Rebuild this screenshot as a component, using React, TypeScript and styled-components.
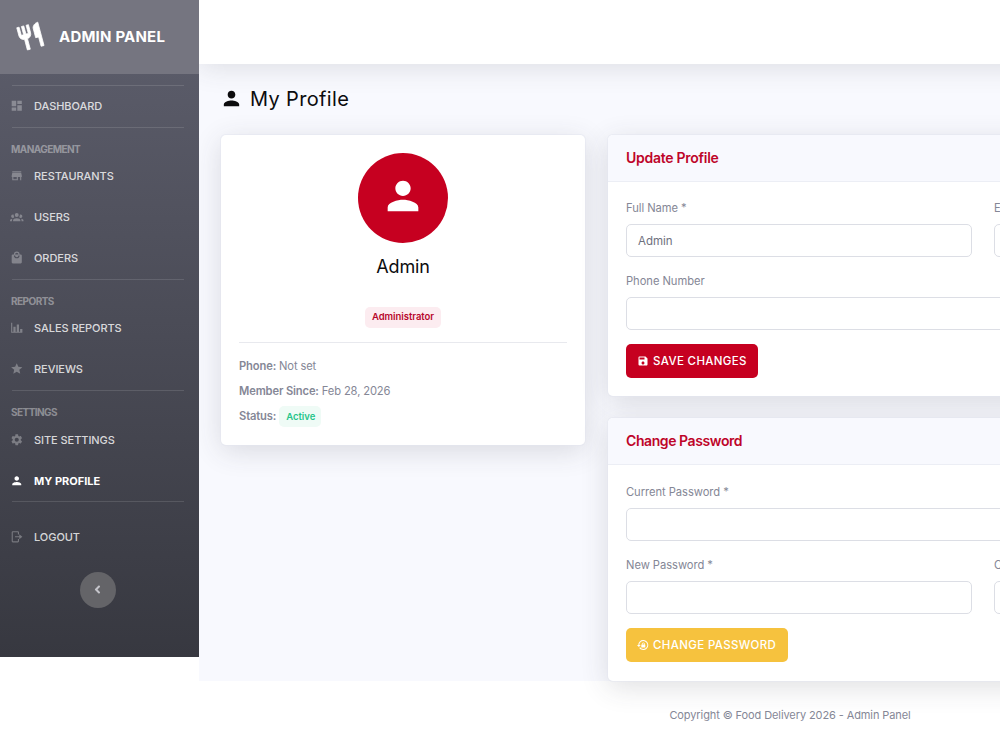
import React from "react";
import styled, { createGlobalStyle, css } from "styled-components";
import {
  MdDashboard, MdStoreMallDirectory, MdStar, MdSettings, MdPerson, MdSave,
} from "react-icons/md";
import { FaAngleLeft } from "react-icons/fa";

const Global = createGlobalStyle`
  * { box-sizing: border-box; }
  html, body { margin: 0; background: #fff; overflow: hidden; }
  body { font-family: Inter, "Liberation Sans", sans-serif; font-size: 11.5px; color: #858796; }
`;

const Page = styled.div`
  display: flex;
  align-items: flex-start;
  width: 1000px;
  height: 750px;
  overflow: hidden;
`;

const Sidebar = styled.nav`
  position: relative;
  z-index: 1;
  flex: none;
  width: 199px;
  height: 657px;
  background: linear-gradient(180deg, #5e5f6d 0%, #373840 100%);
`;
const Brand = styled.div`
  height: 74px;
  display: flex;
  align-items: center;
  padding: 0 0 2px 16px;
  background: #757580;
  color: #fff;
  font-size: 15px;
  font-weight: 700;
  white-space: nowrap;
`;
const BrandIcon = styled.span`
  display: flex;
  width: 43px;
  font-size: 29px;
  transform: rotate(-15deg);
  transform-origin: 15px 15px;
  svg { stroke: currentColor; stroke-width: 0.6px; }
`;
const BrandText = styled.span`letter-spacing: 0.2px;`;
const Divider = styled.div<{ $top?: number }>`
  height: 1px;
  margin: ${(p) => p.$top ?? 0}px 15px 0 12px;
  background: rgba(255, 255, 255, 0.12);
`;
const Heading = styled.div`
  height: 28px;
  padding: 15px 0 0 11px;
  font-size: 10px;
  line-height: 13px;
  font-weight: 700;
  letter-spacing: -0.55px;
  color: rgba(255, 255, 255, 0.4);
`;
const Item = styled.div<{ $active?: boolean; $top?: number; $low?: boolean }>`
  height: 41px;
  margin-top: ${(p) => p.$top ?? 0}px;
  padding: 0 0 ${(p) => (p.$low ? 0 : 2)}px 10px;
  display: flex;
  align-items: center;
  color: rgba(255, 255, 255, 0.8);
  font-size: 11px;
  font-weight: 500;
  letter-spacing: -0.06px;
  white-space: nowrap;
  svg { color: rgba(255, 255, 255, 0.3); }
  ${(p) => p.$active && css`
    color: #fff;
    font-weight: 700;
    letter-spacing: 0;
    svg { color: #fff; }
  `}
`;
const ItemIcon = styled.span`
  display: flex;
  width: 24px;
  font-size: 13.5px;
`;
const Toggle = styled.div`
  width: 36px;
  height: 36px;
  margin: 14px 0 0 80px;
  padding: 0 2px 1px 0;
  border-radius: 50%;
  display: flex;
  align-items: center;
  justify-content: center;
  background: #646468;
  color: #c4c4ca;
  font-size: 13px;
`;

const Main = styled.main`
  flex: none;
  width: 1182px;
`;
const Body = styled.div`
  height: 681px;
  background: #f8f9fe;
`;
const Topbar = styled.div`
  height: 64px;
  background: #fff;
  box-shadow: 0 3px 28px rgba(58, 59, 69, 0.15);
`;
const Title = styled.h1`
  height: 71px;
  margin: 0;
  padding: 0 0 1px 21px;
  display: flex;
  align-items: center;
  gap: 7px;
  font-size: 20px;
  font-weight: 400;
  letter-spacing: 0.35px;
  color: #0c0c0e;
  svg { font-size: 23px; margin-bottom: 2px; }
`;
const Columns = styled.div`
  display: flex;
  align-items: flex-start;
  gap: 23px;
  padding-left: 22px;
`;
const Stack = styled.div`
  display: flex;
  flex-direction: column;
  gap: 22px;
`;
const Card = styled.section<{ $w: number; $h: number }>`
  width: ${(p) => p.$w}px;
  height: ${(p) => p.$h}px;
  border-radius: 5px;
  background: #fff;
  box-shadow: 0 0 0 1px rgba(227, 230, 240, 0.5), 0 6px 28px rgba(58, 59, 69, 0.16);
`;
const CardHead = styled.h2<{ $tight?: boolean }>`
  height: 47px;
  margin: 0;
  padding: 0 18px 1px;
  display: flex;
  align-items: center;
  border-bottom: 1px solid #eceef5;
  border-radius: 5px 5px 0 0;
  background: #f8f9fe;
  font-size: 14px;
  font-weight: 600;
  letter-spacing: ${(p) => (p.$tight ? -0.42 : -0.27)}px;
  color: #be0529;
`;
const Profile = styled.div`
  padding-top: 18px;
  display: flex;
  flex-direction: column;
  align-items: center;
`;
const Avatar = styled.div`
  width: 90px;
  height: 90px;
  border-radius: 50%;
  display: flex;
  align-items: center;
  justify-content: center;
  padding-bottom: 5px;
  background: #c60020;
  color: #fff;
  font-size: 46px;
`;
const Name = styled.div`
  margin-top: 12px;
  height: 24px;
  line-height: 24px;
  font-size: 18px;
  letter-spacing: -0.1px;
  color: #0c0c0e;
`;
const Badge = styled.span<{ $green?: boolean }>`
  display: inline-flex;
  align-items: center;
  height: 21px;
  padding: 0 7px 2px;
  border-radius: 5px;
  font-size: 9.5px;
  font-weight: 600;
  letter-spacing: -0.03px;
  color: ${(p) => (p.$green ? "#27c58a" : "#b8062b")};
  background: ${(p) => (p.$green ? "#effbf6" : "#fcecf0")};
`;
const Role = styled.div`
  display: flex;
  margin-top: 28px;
`;
const Facts = styled.div`
  margin: 14px 18px 0;
  padding-top: 10px;
  border-top: 1px solid #e8e9ee;
`;
const Fact = styled.div`
  height: 25px;
  display: flex;
  align-items: center;
  gap: 3px;
  font-size: 11.2px;
  letter-spacing: -0.14px;
  b { font-weight: 600; }
  ${Badge} { margin-top: 2px; padding: 0 6px 1px 7px; }
`;
const Form = styled.div<{ $top: number }>`padding: ${(p) => p.$top}px 18px 0;`;
const Row = styled.div<{ $top?: number }>`
  display: flex;
  gap: 22px;
  margin-top: ${(p) => p.$top ?? 0}px;
`;
const Field = styled.div`
  flex: 1;
  label {
    display: block;
    height: 25px;
    line-height: 18px;
    font-size: 11.2px;
    letter-spacing: -0.05px;
  }
`;
const Input = styled.div`
  height: 33px;
  padding: 0 10px 0 11px;
  display: flex;
  align-items: center;
  border: 1px solid #dcdee5;
  border-radius: 5px;
  color: #6e707e;
`;
const Button = styled.div<{ $w: number; $yellow?: boolean }>`
  width: ${(p) => p.$w}px;
  height: 34px;
  margin-top: 14px;
  padding: 0 0 1px 11px;
  display: flex;
  align-items: center;
  gap: 4px;
  border-radius: 5px;
  background: ${(p) => (p.$yellow ? "#f6c23e" : "#c60020")};
  color: #fff;
  font-size: 11.5px;
  font-weight: 500;
  letter-spacing: 0.35px;
  white-space: nowrap;
  svg { font-size: 12px; }
`;
const Footer = styled.footer`
  padding-top: 26px;
  text-align: center;
  line-height: 16px;
  font-size: 11px;
  letter-spacing: -0.1px;
`;

const Glyph = ({ d }: { d: string }) => (
  <svg width="1em" height="1em" viewBox="0 0 24 24" fill="currentColor"><path d={d} /></svg>
);
const cutlery = "M11 9H9V2H7V9H5V2H3V9C3 11.120 4.660 12.840 6.750 12.970V22H9.250V12.970C11.340 12.840 13 11.120 13 9V2H11V9M16 6V14H18.500V22H21V2C18.240 2 16 4.240 16 6Z";
const people = "M12 5.500A3.500 3.500 0 1 1 12 12.500A3.500 3.500 0 0 1 12 5.500M5 8C5.560 8 6.080 8.150 6.530 8.420C6.380 9.850 6.800 11.270 7.660 12.380C7.160 13.340 6.160 14 5 14A3 3 0 0 1 5 8M19 8A3 3 0 0 1 19 14C17.840 14 16.840 13.340 16.340 12.380C17.200 11.270 17.620 9.850 17.470 8.420C17.920 8.150 18.440 8 19 8M5.500 18.250C5.500 16.180 8.410 14.500 12 14.500S18.500 16.180 18.500 18.250V20H5.500ZM0 20V18.500C0 17.110 1.890 15.940 4.450 15.600C3.860 16.280 3.500 17.220 3.500 18.250V20ZM24 20H20.500V18.250C20.500 17.220 20.140 16.280 19.550 15.600C22.110 15.940 24 17.110 24 18.500Z";
const bag = "M12 1a5 5 0 0 0-5 5H5a2 2 0 0 0-2 2v12a2 2 0 0 0 2 2h14a2 2 0 0 0 2-2V8a2 2 0 0 0-2-2h-2a5 5 0 0 0-5-5m0 2a3 3 0 0 1 3 3H9a3 3 0 0 1 3-3M7 8H9A3 3 0 0 0 15 8H17A5 5 0 0 1 7 8";
const bars = "M22 21H2V3H4V19H6V10H10V19H12V6H16V19H18V14H22Z";
const exit = "M14 8V4H5V20H14V16H16V20A2 2 0 0 1 14 22H5A2 2 0 0 1 3 20V4A2 2 0 0 1 5 2H14A2 2 0 0 1 16 4V8ZM16.500 7.500L22 12L16.500 16.500V13H9V11H16.500Z";
const lockReset = "M12.600 2A10 10 0 1 1 4.500 18L6.200 16.700A8 8 0 1 0 4.600 12H7.500L3.700 16L0 12H2.600A10 10 0 0 1 12.600 2M15.600 11V10A3 3 0 0 0 9.600 10V11A1 1 0 0 0 8.600 12V16A1 1 0 0 0 9.600 17H15.600A1 1 0 0 0 16.600 16V12A1 1 0 0 0 15.600 11M14.300 11H10.900V10A1.700 1.700 0 0 1 14.300 10Z";

type NavItemProps = { icon: React.ReactNode; children: React.ReactNode; active?: boolean; top?: number; low?: boolean };
const NavItem = ({ icon, children, active, top, low }: NavItemProps) => (
  <Item $active={active} $top={top} $low={low}><ItemIcon>{icon}</ItemIcon>{children}</Item>
);
const FormField = ({ label, value }: { label: string; value?: string }) => (
  <Field><label>{label}</label><Input>{value}</Input></Field>
);

export default function App() {
  return (
    <>
      <Global />
      <Page>
        <Sidebar>
          <Brand><BrandIcon><Glyph d={cutlery} /></BrandIcon><BrandText>ADMIN PANEL</BrandText></Brand>
          <Divider $top={11} />
          <NavItem icon={<MdDashboard />}>DASHBOARD</NavItem>
          <Divider />
          <Heading>MANAGEMENT</Heading>
          <NavItem icon={<MdStoreMallDirectory />}>RESTAURANTS</NavItem>
          <NavItem icon={<Glyph d={people} />}>USERS</NavItem>
          <NavItem icon={<Glyph d={bag} />}>ORDERS</NavItem>
          <Divider />
          <Heading>REPORTS</Heading>
          <NavItem icon={<Glyph d={bars} />}>SALES REPORTS</NavItem>
          <NavItem icon={<MdStar />}>REVIEWS</NavItem>
          <Divider />
          <Heading>SETTINGS</Heading>
          <NavItem icon={<MdSettings />} low>SITE SETTINGS</NavItem>
          <NavItem icon={<MdPerson />} active low>MY PROFILE</NavItem>
          <Divider />
          <NavItem icon={<Glyph d={exit} />} top={15}>LOGOUT</NavItem>
          <Toggle><FaAngleLeft /></Toggle>
        </Sidebar>
        <Main>
          <Body>
            <Topbar />
            <Title><MdPerson />My Profile</Title>
            <Columns>
              <Card $w={364} $h={310}>
                <Profile>
                  <Avatar><MdPerson /></Avatar>
                  <Name>Admin</Name>
                  <Role><Badge>Administrator</Badge></Role>
                </Profile>
                <Facts>
                  <Fact><b>Phone:</b> Not set</Fact>
                  <Fact><b>Member Since:</b> Feb 28, 2026</Fact>
                  <Fact><b>Status:</b> <Badge $green>Active</Badge></Fact>
                </Facts>
              </Card>
              <Stack>
                <Card $w={750} $h={261}>
                  <CardHead>Update Profile</CardHead>
                  <Form $top={17}>
                    <Row><FormField label="Full Name *" value="Admin" /><FormField label="Email *" /></Row>
                    <Row $top={15}><FormField label="Phone Number" /></Row>
                    <Button $w={132}><MdSave />SAVE CHANGES</Button>
                  </Form>
                </Card>
                <Card $w={750} $h={263}>
                  <CardHead $tight>Change Password</CardHead>
                  <Form $top={18}>
                    <Row><FormField label="Current Password *" /></Row>
                    <Row $top={15}><FormField label="New Password *" /><FormField label="Confirm Password *" /></Row>
                    <Button $w={162} $yellow><Glyph d={lockReset} />CHANGE PASSWORD</Button>
                  </Form>
                </Card>
              </Stack>
            </Columns>
          </Body>
          <Footer>Copyright © Food Delivery 2026 - Admin Panel</Footer>
        </Main>
      </Page>
    </>
  );
}
